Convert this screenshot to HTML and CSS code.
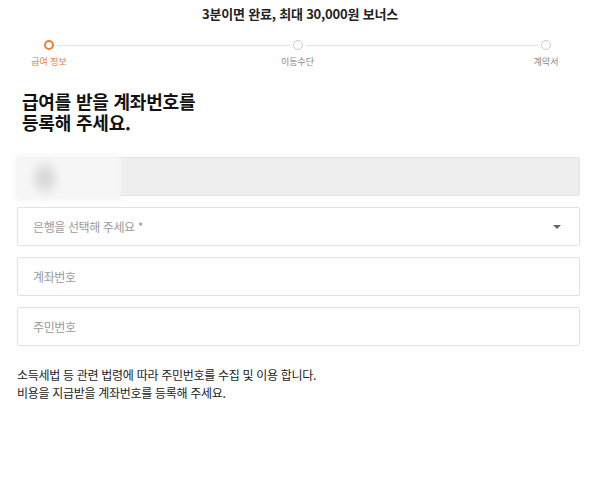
FILE: index.html
```html
<!DOCTYPE html>
<html lang="ko">
<head>
<meta charset="utf-8">
<link rel="stylesheet" href="styles.css">
</head>
<body>
<div class="page">
  <h1 class="title">3분이면 완료, 최대 30,000원 보너스</h1>

  <div class="stepper">
    <div class="step active">
      <span class="dot"></span>
      <span class="step-label">급여 정보</span>
    </div>
    <span class="line"></span>
    <div class="step">
      <span class="dot"></span>
      <span class="step-label">이동수단</span>
    </div>
    <span class="line"></span>
    <div class="step">
      <span class="dot"></span>
      <span class="step-label">계약서</span>
    </div>
  </div>

  <h2 class="heading">급여를 받을 계좌번호를<br>등록해 주세요.</h2>

  <div class="form">
    <div class="field field-disabled">
      <span class="blur"></span>
    </div>
    <div class="field field-select">
      <span class="placeholder">은행을 선택해 주세요 *</span>
      <span class="caret"></span>
    </div>
    <div class="field">
      <span class="placeholder">계좌번호</span>
    </div>
    <div class="field">
      <span class="placeholder">주민번호</span>
    </div>
  </div>

  <p class="notice">소득세법 등 관련 법령에 따라 주민번호를 수집 및 이용 합니다.<br>비용을 지급받을 계좌번호를 등록해 주세요.</p>
</div>
</body>
</html>
```

FILE: styles.css
```css
* { box-sizing: border-box; }
html, body { margin: 0; padding: 0; background: #fff; }
body {
  font-family: "Noto Sans CJK KR", "Noto Sans", sans-serif;
  color: #222;
}
.page {
  width: 600px;
  height: 480px;
  overflow: hidden;
}
.title {
  margin: 0;
  padding-top: 5px;
  font-size: 13px;
  line-height: 18px;
  font-weight: 700;
  text-align: center;
  color: #222;
  letter-spacing: -0.2px;
}
.stepper {
  display: flex;
  align-items: flex-start;
  margin-top: 17px;
  padding: 0 34px 0 29px;
}
.step {
  width: 40px;
  display: flex;
  flex-direction: column;
  align-items: center;
  flex: none;
}
.dot {
  width: 10px;
  height: 10px;
  border-radius: 50%;
  border: 1.5px solid #c9c9c9;
  background: #fff;
}
.step.active .dot { border: 2px solid #e57f3c; }
.step-label {
  margin-top: 5px;
  font-size: 9px;
  line-height: 14px;
  color: #8a8a8a;
  white-space: nowrap;
}
.step.active .step-label { color: #e57f3c; }
.line {
  flex: 1;
  height: 1px;
  margin: 4.5px -12px 0;
  background: #e2e2e2;
}
.heading {
  margin: 22px 0 0 22px;
  font-size: 18px;
  line-height: 21px;
  font-weight: 700;
  color: #111;
  letter-spacing: -0.2px;
}
.form {
  margin: 24px 20px 0 17px;
  display: flex;
  flex-direction: column;
  gap: 11px;
}
.field {
  position: relative;
  height: 39px;
  border: 1px solid #e2e2e2;
  border-radius: 2px;
  display: flex;
  align-items: center;
  padding: 0 18px 0 15px;
  background: #fff;
}
.field-disabled {
  background: #eeeeee;
  border-color: #e4e4e4;
}
.blur {
  position: absolute;
  left: -3px;
  top: -3px;
  width: 106px;
  height: 46px;
  background: radial-gradient(ellipse 16px 20px at 30px 23px, #d2d2d2 0%, #e4e4e4 55%, #f6f6f6 100%);
  filter: blur(2.5px);
}
.placeholder {
  font-size: 12px;
  color: #9a9a9a;
  letter-spacing: -0.4px;
}
.field-select { justify-content: space-between; }
.caret {
  width: 0;
  height: 0;
  border-left: 4.5px solid transparent;
  border-right: 4.5px solid transparent;
  border-top: 4.5px solid #666;
}
.notice {
  margin: 20px 0 0 17px;
  font-size: 12px;
  line-height: 18px;
  color: #222;
  letter-spacing: -0.3px;
}
```
